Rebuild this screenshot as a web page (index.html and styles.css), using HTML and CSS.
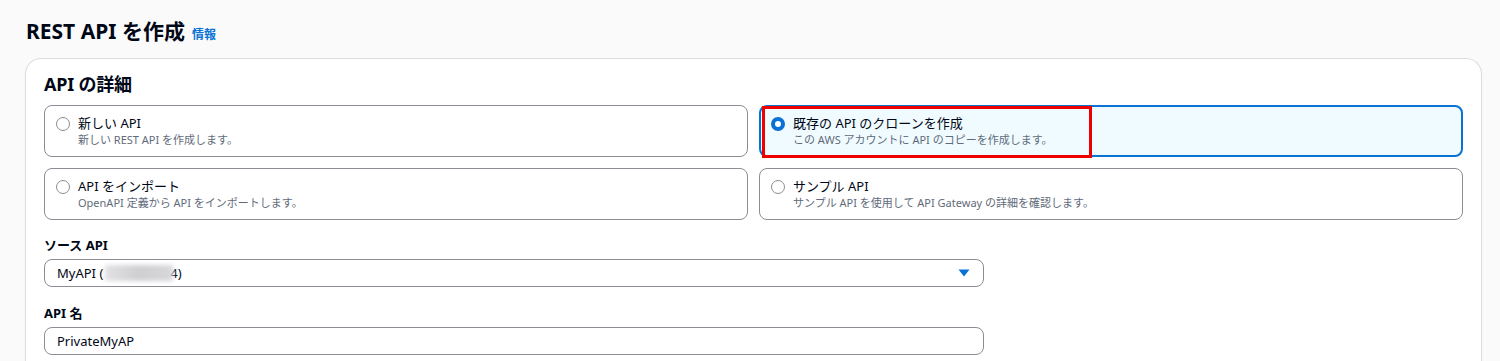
FILE: index.html
```html
<!DOCTYPE html>
<html lang="ja">
<head>
<meta charset="utf-8">
<title>REST API を作成</title>
<link rel="stylesheet" href="styles.css">
</head>
<body>
<div class="page">
  <header class="page-header">
    <h1 class="title">REST API を作成</h1>
    <a class="info" href="#">情報</a>
  </header>
  <section class="card">
    <h2 class="card-title">API の詳細</h2>
    <div class="tiles">
      <label class="tile">
        <span class="radio"></span>
        <span class="tile-text">
          <span class="tile-label">新しい API</span>
          <span class="tile-desc">新しい REST API を作成します。</span>
        </span>
      </label>
      <label class="tile tile-selected">
        <span class="radio radio-on"></span>
        <span class="tile-text">
          <span class="tile-label">既存の API のクローンを作成</span>
          <span class="tile-desc">この AWS アカウントに API のコピーを作成します。</span>
        </span>
        <span class="highlight"></span>
      </label>
      <label class="tile">
        <span class="radio"></span>
        <span class="tile-text">
          <span class="tile-label">API をインポート</span>
          <span class="tile-desc">OpenAPI 定義から API をインポートします。</span>
        </span>
      </label>
      <label class="tile">
        <span class="radio"></span>
        <span class="tile-text">
          <span class="tile-label">サンプル API</span>
          <span class="tile-desc">サンプル API を使用して API Gateway の詳細を確認します。</span>
        </span>
      </label>
    </div>
    <div class="field field-first">
      <div class="field-label">ソース API</div>
      <div class="control select">
        <span class="value">MyAPI (<span class="blur"></span><span class="tail">4)</span></span>
        <svg class="caret" width="12" height="8" viewBox="0 0 12 8"><path d="M0.5 0.5h11L6 7.5z" fill="#0972d3"/></svg>
      </div>
    </div>
    <div class="field">
      <div class="field-label">API 名</div>
      <div class="control input"><span class="value">PrivateMyAP</span></div>
    </div>
  </section>
</div>
</body>
</html>
```

FILE: styles.css
```css
* { box-sizing: border-box; }
html, body { margin: 0; padding: 0; }
body {
  background: #fafafa;
  font-family: "Noto Sans", "Noto Sans CJK JP", sans-serif;
  color: #000716;
  width: 1500px;
  height: 361px;
  overflow: hidden;
}
.page { padding: 18px 0 0 25px; }
.page-header {
  display: flex;
  align-items: baseline;
  gap: 7px;
  padding-left: 1px;
  height: 40px;
}
.title {
  margin: 0;
  font-size: 21px;
  line-height: 27px;
  font-weight: 700;
}
.info {
  color: #0972d3;
  font-size: 12px;
  font-weight: 700;
  text-decoration: none;
}
.card {
  width: 1457px;
  height: 303px;
  background: #fff;
  border: 1px solid #dcdde0;
  border-bottom: none;
  border-radius: 16px 16px 0 0;
  padding: 13px 17px 0 18px;
  box-shadow: 0 1px 2px rgba(0, 7, 22, 0.06);
}
.card-title {
  margin: 0;
  font-size: 18px;
  line-height: 24px;
  font-weight: 700;
  letter-spacing: -0.2px;
}
.tiles {
  margin-top: 9px;
  display: grid;
  grid-template-columns: 704px 704px;
  column-gap: 11px;
  row-gap: 11px;
}
.tile {
  position: relative;
  display: flex;
  align-items: flex-start;
  gap: 8px;
  height: 52px;
  border: 1px solid #8c8c94;
  border-radius: 8px;
  padding: 8px 11px 0 11px;
  background: #fff;
}
.tile-selected {
  border: 2px solid #0972d3;
  background: #f0fbff;
  padding: 7px 10px 0 10px;
}
.radio {
  flex: none;
  width: 14px;
  height: 14px;
  margin-top: 3px;
  border: 1.5px solid #8c8c94;
  border-radius: 50%;
  background: #fff;
}
.radio-on {
  border: 4px solid #0972d3;
}
.tile-text {
  display: flex;
  flex-direction: column;
}
.tile-label {
  font-size: 13px;
  line-height: 18px;
}
.tile-desc {
  font-size: 11px;
  line-height: 16px;
  color: #5f6b7a;
}
.highlight {
  position: absolute;
  left: 1px;
  top: -1px;
  width: 330px;
  height: 52px;
  border: 3px solid #ee0000;
  pointer-events: none;
}
.field { margin-top: 17px; }
.field-first { margin-top: 16px; }
.field-label {
  font-size: 13px;
  line-height: 18px;
  font-weight: 700;
  margin-bottom: 5px;
}
.control {
  width: 940px;
  height: 28px;
  border: 1px solid #8c8c94;
  border-radius: 8px;
  display: flex;
  align-items: center;
  padding: 0 12px;
  font-size: 13px;
  background: #fff;
}
.select { justify-content: space-between; }
.value { display: inline-flex; align-items: center; }
.blur {
  display: inline-block;
  width: 68px;
  height: 16px;
  margin: 0 0 0 2px;
  background: linear-gradient(90deg, #e2e2e4, #cfcfd2 50%, #d8d8db);
  filter: blur(2px);
}
.tail { margin-left: -3px; }
.caret { margin-right: 1px; }
```
